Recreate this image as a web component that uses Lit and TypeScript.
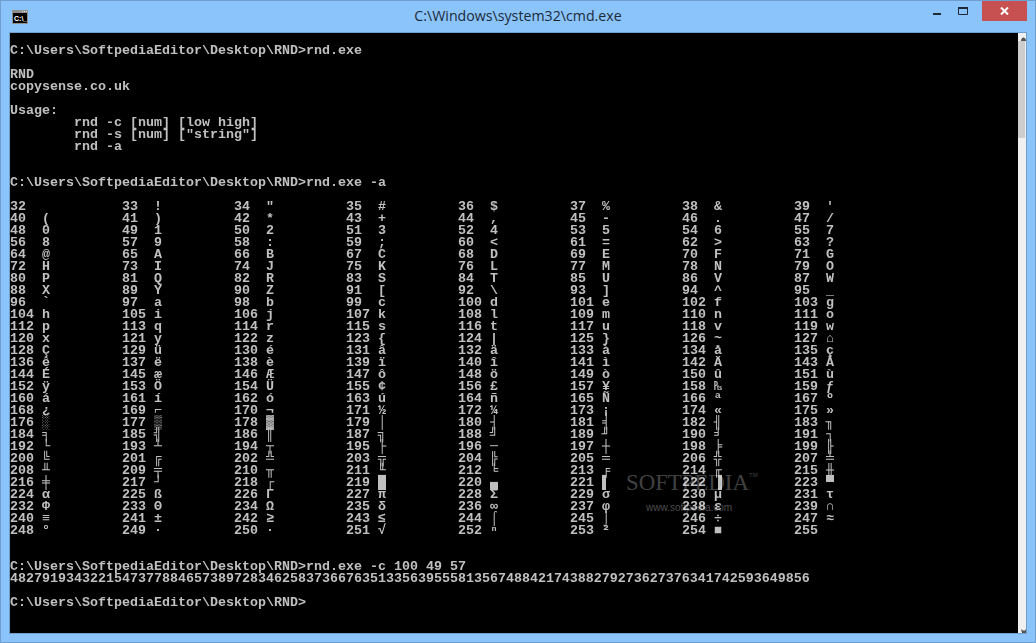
import { LitElement, html, css } from "lit";
import { customElement } from "lit/decorators.js";

const HIGH =
  "ÇüéâäàåçêëèïîìÄÅÉæÆôöòûùÿÖÜ¢£¥₧ƒáíóúñÑªº¿⌐¬½¼¡«»░▒▓│┤╡╢╖╕╣║╗╝╜╛┐└┴┬├─┼╞╟╚╔╩╦╠═╬╧╨╤╥╙╘╒╓╫╪┘┌█▄▌▐▀αßΓπΣσµτΦΘΩδ∞φε∩≡±≥≤⌠⌡÷≈°∙·√ⁿ²■ ";

function glyph(code: number): string {
  if (code === 127) return "⌂";
  if (code >= 128) return HIGH[code - 128];
  return String.fromCharCode(code);
}

const PROMPT = "C:\\Users\\SoftpediaEditor\\Desktop\\RND>";
const DIGITS =
  "4827919343221547377884657389728346258373667635133563955581356748842174388279273627376341742593649856";

const codes: number[] = [];
for (let c = 32; c < 256; c++) codes.push(c);

@customElement("app-root")
export class AppRoot extends LitElement {
  static styles = css`
    :host {
      display: block;
      width: 1036px;
      height: 643px;
      overflow: hidden;
    }
    .window {
      position: relative;
      width: 1036px;
      height: 643px;
      box-sizing: border-box;
      background: #8ac4fb;
      border: 1px solid #6f9fcf;
      display: flex;
      flex-direction: column;
    }
    .titlebar {
      height: 31px;
      display: grid;
      grid-template-columns: 1fr auto 1fr;
      align-items: start;
    }
    .icon {
      display: block;
      margin: 9px 0 0 11px;
    }
    .title {
      font: 14.2px/30px "Open Sans", "Noto Sans", sans-serif;
      color: #1c2a38;
      white-space: nowrap;
    }
    .controls {
      justify-self: end;
      display: flex;
      align-items: flex-start;
      padding-right: 8px;
    }
    .min, .max {
      width: 26px;
      height: 20px;
      display: flex;
      justify-content: center;
      align-items: flex-start;
    }
    .min svg { margin-top: 12px; }
    .max svg { margin-top: 6px; }
    .max { margin-right: 6px; }
    .close {
      width: 45px;
      height: 20px;
      background: #c75050;
      display: flex;
      justify-content: center;
      align-items: center;
    }
    .client {
      display: flex;
      margin-left: 8px;
      height: 600px;
      width: 1016px;
      border: 1px solid #6f9fcf;
    }
    .console {
      width: 1008px;
      height: 600px;
      background: #000;
      color: #c0c0c0;
      font: bold 13.333px/12px "Liberation Mono", "DejaVu Sans Mono", monospace;
      overflow: hidden;
      filter: grayscale(1);
    }
    .line { height: 12px; white-space: pre; }
    .table {
      display: grid;
      grid-template-columns: repeat(8, 112px);
      grid-auto-rows: 12px;
    }
    .cell { display: flex; height: 12px; white-space: pre; }
    .num { width: 32px; }
    .ch { width: 8px; display: block; text-align: center; }
    .scroll {
      width: 8px;
      height: 600px;
      background: #f0f0f0;
      display: flex;
      flex-direction: column;
    }
    .arrow { height: 8px; display: block; }
    .thumb {
      width: 7px;
      height: 97px;
      background: #cdcdcd;
    }
    .track { flex: 1; }
    .watermark {
      position: absolute;
      left: 625px;
      top: 467px;
      color: rgba(255, 255, 255, 0.27);
      pointer-events: none;
      font-family: "Liberation Serif", serif;
    }
    .wm-name {
      font-size: 22.8px;
      line-height: 30px;
      white-space: nowrap;
    }
    .wm-tm {
      position: absolute;
      left: 123px;
      top: 3px;
      font: 6px/8px "Liberation Sans", sans-serif;
    }
    .wm-url {
      font: 10px/12px "Liberation Sans", sans-serif;
      margin: 4px 0 0 20px;
      white-space: nowrap;
      color: rgba(255, 255, 255, 0.3);
    }
  `;

  private line(text = "") {
    return html`<div class="line">${text}</div>`;
  }

  render() {
    const top = [
      "",
      PROMPT + "rnd.exe",
      "",
      "RND",
      "copysense.co.uk",
      "",
      "Usage:",
      "        rnd -c [num] [low high]",
      '        rnd -s [num] ["string"]',
      "        rnd -a",
      "",
      "",
      PROMPT + "rnd.exe -a",
      "",
    ];
    const bottom = [
      "",
      "",
      PROMPT + "rnd.exe -c 100 49 57",
      DIGITS,
      "",
      PROMPT,
    ];
    return html`
      <div class="window">
        <div class="titlebar">
          <svg class="icon" width="16" height="14" viewBox="0 0 16 14">
            <rect x="0" y="0" width="16" height="14" fill="#8f8f8f" />
            <rect x="10" y="1" width="1" height="1" fill="#e6e6e6" />
            <rect x="12" y="1" width="1" height="1" fill="#e6e6e6" />
            <rect x="14" y="1" width="1" height="1" fill="#e6e6e6" />
            <rect x="1" y="3" width="14" height="10" fill="#000" />
            <text x="2" y="11" font-family="Liberation Sans" font-weight="bold" font-size="7" fill="#fff">C:\\_</text>
          </svg>
          <div class="title">C:\\Windows\\system32\\cmd.exe</div>
          <div class="controls">
            <div class="min">
              <svg width="8" height="2"><rect width="8" height="2" fill="#1f2a36" /></svg>
            </div>
            <div class="max">
              <svg width="10" height="8" viewBox="0 0 10 8">
                <path d="M0.5 1.5H9.5V7.5H0.5Z" fill="none" stroke="#1f2a36" />
                <rect width="10" height="2" fill="#1f2a36" />
              </svg>
            </div>
            <div class="close">
              <svg width="9" height="8" viewBox="0 0 9 8">
                <path d="M1 0.5L8 7.5M8 0.5L1 7.5" stroke="#fff" stroke-width="2" fill="none" />
              </svg>
            </div>
          </div>
        </div>
        <div class="client">
          <div class="console">
            ${top.map((t) => this.line(t))}
            <div class="table">
              ${codes.map(
                (c) => html`<div class="cell"><span class="num">${c}</span><span class="ch">${glyph(c)}</span></div>`
              )}
            </div>
            ${bottom.map((t) => this.line(t))}
          </div>
          <div class="scroll">
            <svg class="arrow" width="8" height="8" viewBox="0 0 8 8">
              <path d="M3 8V6.5L5 4.5H6L8 6.5V8Z" fill="#555" />
            </svg>
            <div class="thumb"></div>
            <div class="track"></div>
            <svg class="arrow" width="8" height="8" viewBox="0 0 8 8">
              <path d="M3 4L5 5.5H7L8 4V8H4Z" fill="#555" />
            </svg>
          </div>
        </div>
        <div class="watermark">
          <div class="wm-name">SOFTPEDIA</div>
          <div class="wm-tm">TM</div>
          <div class="wm-url">www.softpedia.com</div>
        </div>
      </div>
    `;
  }
}
